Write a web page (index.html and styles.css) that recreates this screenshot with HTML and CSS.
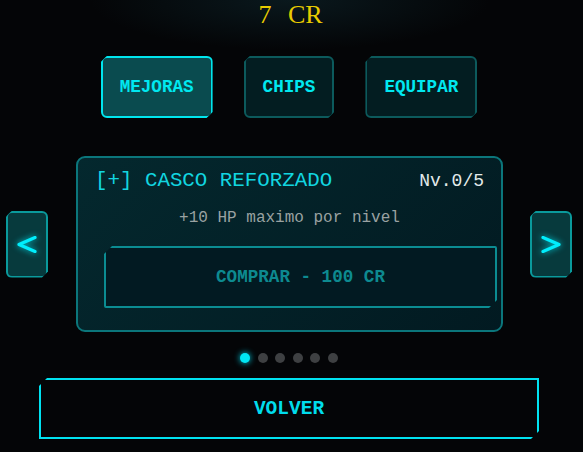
FILE: index.html
```html
<!DOCTYPE html>
<html lang="es">
<head>
    <meta charset="UTF-8">
    <meta name="viewport" content="width=device-width, initial-scale=1.0">
    <title>Tienda</title>
    <link rel="stylesheet" href="styles.css">
</head>
<body>
    <div class="app">
        <div class="credits">7 CR</div>

        <div class="tabs">
            <button class="tab active">MEJORAS</button>
            <button class="tab">CHIPS</button>
            <button class="tab">EQUIPAR</button>
        </div>

        <div class="slider">
            <button class="arrow" aria-label="Anterior">
                <svg width="20" height="17" viewBox="0 0 20 17"><polyline points="18,1.5 2,8.5 18,15.5" /></svg>
            </button>

            <div class="card">
                <div class="card-head">
                    <span class="card-title">[+] CASCO REFORZADO</span>
                    <span class="card-level">Nv.0/5</span>
                </div>
                <p class="card-desc">+10 HP maximo por nivel</p>
                <button class="buy">COMPRAR - 100 CR</button>
            </div>

            <button class="arrow" aria-label="Siguiente">
                <svg width="20" height="17" viewBox="0 0 20 17"><polyline points="2,1.5 18,8.5 2,15.5" /></svg>
            </button>
        </div>

        <div class="dots">
            <span class="dot on"></span>
            <span class="dot"></span>
            <span class="dot"></span>
            <span class="dot"></span>
            <span class="dot"></span>
            <span class="dot"></span>
        </div>

        <button class="back">VOLVER</button>
    </div>
</body>
</html>
```

FILE: styles.css
```css
body {
    margin: 0;
    padding: 0;
    background-color: #040507;
    background-image: radial-gradient(ellipse 200px 50px at 290px 0, rgba(20, 60, 70, 0.35), transparent);
    background-repeat: no-repeat;
    font-family: 'Courier New', Courier, 'Nimbus Mono PS', 'FreeMono', 'Liberation Mono', monospace;
    height: 452px;
    overflow: hidden;
}

.app {
    width: 578px;
    display: flex;
    flex-direction: column;
    align-items: center;
}

button {
    font-family: inherit;
    cursor: pointer;
}

.credits {
    font-family: 'Liberation Serif', serif;
    font-size: 26px;
    line-height: 30px;
    color: #e8cc00;
    word-spacing: 10px;
    margin-top: 0;
    padding-left: 3px;
}

.tabs {
    display: flex;
    gap: 31px;
    margin-top: 26px;
}

.tab {
    height: 62px;
    padding: 0 17px;
    font-size: 17.6px;
    font-weight: bold;
    color: #00e8f0;
    background-color: #031d21;
    border: 2px solid #0c5a5c;
    border-radius: 6px;
    clip-path: polygon(6px 0, 100% 0, 100% calc(100% - 6px), calc(100% - 6px) 100%, 0 100%, 0 6px);
}

.tab.active {
    background-color: #0a4b4f;
    border-color: #00e6ee;
}

.slider {
    display: flex;
    align-items: center;
    align-self: flex-start;
    margin-top: 38px;
    padding-left: 6px;
}

.arrow {
    width: 42px;
    height: 67px;
    padding: 0;
    display: flex;
    align-items: center;
    justify-content: center;
    background-color: #073a3d;
    border: 2px solid #0a9a9c;
    border-radius: 6px;
    clip-path: polygon(6px 0, 100% 0, 100% calc(100% - 6px), calc(100% - 6px) 100%, 0 100%, 0 6px);
}

.arrow svg {
    fill: none;
    stroke: #00eefc;
    stroke-width: 3.2;
    stroke-linecap: round;
    stroke-linejoin: round;
    filter: drop-shadow(0 0 3px rgba(0, 238, 252, 0.8));
}

.card {
    width: 427px;
    height: 176px;
    box-sizing: border-box;
    margin: 0 27px 0 28px;
    padding: 11px 17px 0 17px;
    border: 2px solid #0b767b;
    border-radius: 9px;
    background-image: linear-gradient(135deg, #04282e, #021a21);
}

.card-head {
    display: flex;
    justify-content: space-between;
    align-items: baseline;
    height: 24px;
    line-height: 24px;
}

.card-title {
    font-size: 20.8px;
    color: #12d6e0;
}

.card-level {
    font-size: 18px;
    color: #e2eaea;
}

.card-desc {
    margin: 16px 0 0 0;
    font-size: 16px;
    line-height: 18px;
    color: #9aa2a2;
    text-align: center;
}

.buy {
    display: block;
    width: 393px;
    height: 62px;
    margin: 19px 0 0 9px;
    font-size: 17.6px;
    font-weight: bold;
    color: #0d8a90;
    background-color: #021a22;
    border: 2px solid #0b8c92;
    border-radius: 2px;
    clip-path: polygon(8px 0, 100% 0, 100% calc(100% - 8px), calc(100% - 8px) 100%, 0 100%, 0 8px);
}

.dots {
    display: flex;
    gap: 7.6px;
    margin-top: 21px;
}

.dot {
    width: 10px;
    height: 10px;
    border-radius: 50%;
    background-color: #3e4042;
}

.dot.on {
    background-color: #00e6f4;
    box-shadow: 0 0 6px #00d8ee;
}

.back {
    width: 500px;
    height: 61px;
    margin-top: 15px;
    font-size: 19.5px;
    font-weight: bold;
    color: #00dcec;
    background-color: transparent;
    border: 2px solid #00e2f0;
    clip-path: polygon(8px 0, 100% 0, 100% calc(100% - 8px), calc(100% - 8px) 100%, 0 100%, 0 8px);
}
```
